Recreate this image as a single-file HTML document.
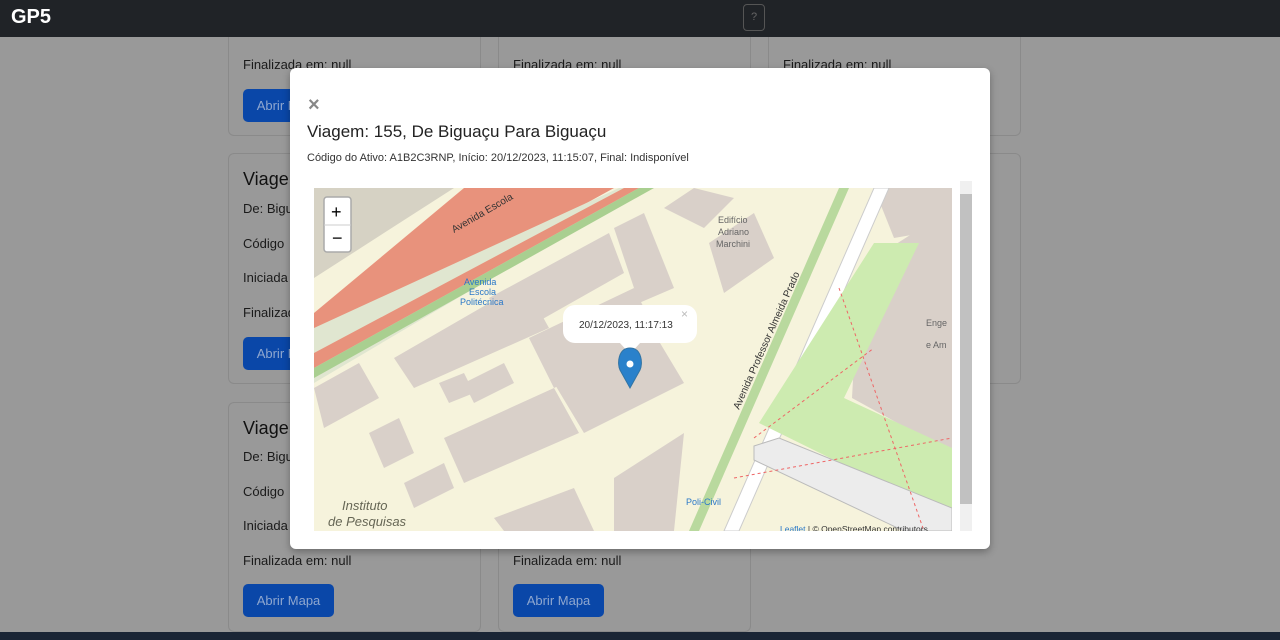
<!DOCTYPE html>
<html><head><meta charset="utf-8"><style>
*{box-sizing:border-box;margin:0;padding:0}
body{width:1280px;height:640px;overflow:hidden;background:#999;font-family:"Liberation Sans",sans-serif;position:relative;color:#111}
.nav{position:absolute;left:0;top:0;width:1280px;height:37px;background:#202327;z-index:5}
.nav .b{position:absolute;left:11px;top:6px;color:#fff;font-size:20px;font-weight:bold}
.nav .q{position:absolute;left:743px;top:4px;width:22px;height:27px;border:1px solid #555;border-radius:4px;color:#666;font-size:11px;text-align:center;line-height:25px}
.card{position:absolute;width:253px;border:1px solid #8a8a8a;border-radius:6px;background:#999}
.card .t{position:absolute;left:14px;font-size:18px;color:#111}
.card p{position:absolute;left:14px;font-size:13px;color:#1a1a1a;white-space:nowrap}
.btn{position:absolute;left:14px;width:91px;height:33px;background:#0a47a8;border-radius:5px;color:#8fa7cf;font-size:13px;line-height:33px;text-align:center}
.modal{position:absolute;left:290px;top:68px;width:700px;height:481px;background:#fff;border-radius:6px;box-shadow:0 3px 8px rgba(0,0,0,.3);z-index:3}
.tb{position:absolute;left:0;top:632px;width:1280px;height:8px;background:#1a2535}
</style></head><body>
<div class="nav"><div class="b">GP5</div><div class="q">?</div></div>

<div class="card" style="left:228px;top:-20px;height:156px"><p style="top:76px">Finalizada em: null</p><div class="btn" style="top:108px">Abrir Mapa</div></div>
<div class="card" style="left:498px;top:-20px;height:156px"><p style="top:76px">Finalizada em: null</p></div>
<div class="card" style="left:768px;top:-20px;height:156px"><p style="top:76px">Finalizada em: null</p></div>

<div class="card" style="left:228px;top:153px;height:231px"><div class="t" style="top:15px">Viagem</div><p style="top:47px">De: Biguaçu</p><p style="top:82px">Código</p><p style="top:116px">Iniciada</p><p style="top:151px">Finalizada</p><div class="btn" style="top:183px">Abrir Mapa</div></div>
<div class="card" style="left:498px;top:153px;height:231px"></div>
<div class="card" style="left:768px;top:153px;height:231px"></div>

<div class="card" style="left:228px;top:402px;height:230px"><div class="t" style="top:15px">Viagem</div><p style="top:46px">De: Biguaçu</p><p style="top:81px">Código</p><p style="top:115px">Iniciada</p><p style="top:150px">Finalizada em: null</p><div class="btn" style="top:181px">Abrir Mapa</div></div>
<div class="card" style="left:498px;top:402px;height:230px"><p style="top:150px">Finalizada em: null</p><div class="btn" style="top:181px">Abrir Mapa</div></div>

<div class="modal">
<div style="position:absolute;left:18px;top:26px;font-size:20px;color:#888;font-weight:bold">×</div>
<div style="position:absolute;left:17px;top:54px;font-size:17px;color:#222">Viagem: 155, De Biguaçu Para Biguaçu</div>
<div style="position:absolute;left:17px;top:84px;font-size:11px;color:#333">Código do Ativo: A1B2C3RNP, Início: 20/12/2023, 11:15:07, Final: Indisponível</div>
<div style="position:absolute;left:670px;top:113px;width:12px;height:350px;background:#f0f0f0"><div style="position:absolute;top:13px;left:0;width:12px;height:310px;background:#c1c1c1"></div></div>
<svg style="position:absolute;left:24px;top:120px" width="638" height="343" viewBox="0 0 638 343">
<rect width="638" height="343" fill="#f6f3dc"/>
<polygon points="0,0 140,0 0,90" fill="#d6d2c4"/>
<polygon points="150,0 300,0 0,165 0,125" fill="#e8927c"/>
<polygon points="0,140 305,0 330,0 0,195" fill="#e0e6d0"/>
<polygon points="0,165 310,0 325,0 0,180" fill="#e8927c"/>
<polygon points="0,180 325,0 340,0 0,190" fill="#a9cf90"/>
<g fill="#d9d0c9">
<polygon points="80,170 210,95 235,140 100,200"/>
<polygon points="175,110 295,45 310,85 195,150"/>
<polygon points="300,40 330,25 360,100 325,115"/>
<polygon points="215,150 320,100 345,150 240,200"/>
<polygon points="240,195 340,145 370,195 270,245"/>
<polygon points="130,250 240,200 265,245 150,295"/>
<polygon points="0,200 45,175 65,210 10,240"/>
<polygon points="125,195 150,185 160,205 135,215"/>
<polygon points="150,195 190,175 200,195 160,215"/>
<polygon points="90,295 130,275 140,300 100,320"/>
<polygon points="55,245 85,230 100,265 70,280"/>
<polygon points="300,290 370,245 360,343 300,343"/>
<polygon points="350,20 380,0 420,10 390,40"/>
<polygon points="395,55 440,25 460,70 410,105"/>
<polygon points="545,80 638,20 638,265 538,210"/>
<polygon points="560,0 638,0 638,40 580,50"/>
<polygon points="180,330 260,300 280,343 190,343"/>
</g>
<polygon points="375,343 525,0 535,0 385,343" fill="#b9d99e"/>
<polygon points="395,343 545,0 555,0 405,343" fill="#f6f3dc"/>
<polygon points="410,343 560,0 575,0 425,343" fill="#fff" stroke="#ccc"/>
<polygon points="445,235 560,55 605,55 530,210 638,260 638,330" fill="#cdebb0"/>
<polygon points="440,258 465,250 638,320 638,343 590,343 440,272" fill="#ececec" stroke="#bbb"/>
<g stroke="#e66" stroke-dasharray="3,3" fill="none" stroke-width="1"><path d="M525,100 L610,343"/><path d="M440,250 L560,160"/><path d="M420,290 L638,250"/></g>
<text x="404" y="35" font-size="9" fill="#666">Edifício</text><text x="404" y="47" font-size="9" fill="#666">Adriano</text><text x="402" y="59" font-size="9" fill="#666">Marchini</text>
<text x="150" y="97" font-size="9" fill="#2a78c8">Avenida</text><text x="155" y="107" font-size="9" fill="#2a78c8">Escola</text><text x="146" y="117" font-size="9" fill="#2a78c8">Politécnica</text>
<text x="372" y="317" font-size="9" fill="#2a78c8">Poli-Civil</text>
<text x="28" y="322" font-size="13" font-style="italic" fill="#665">Instituto</text><text x="14" y="338" font-size="13" font-style="italic" fill="#665">de Pesquisas</text>
<text x="0" y="0" font-size="10" fill="#333" transform="translate(425,222) rotate(-66)">Avenida Professor Almeida Prado</text>
<text x="0" y="0" font-size="10" fill="#333" transform="translate(140,45) rotate(-30)">Avenida Escola</text>
<text x="612" y="138" font-size="9" fill="#666">Enge</text><text x="612" y="160" font-size="9" fill="#666">e Am</text>
<text x="466" y="344" font-size="8.5" fill="#333"><tspan fill="#2a78c8">Leaflet</tspan> | © OpenStreetMap contributors</text>
<rect x="10" y="9" width="27" height="55" rx="3" fill="#fff" stroke="#aaa" stroke-width="1.5"/>
<line x1="10" y1="37" x2="37" y2="37" stroke="#ccc"/>
<text x="17" y="30" font-size="18" fill="#000">+</text><text x="18" y="56" font-size="18" fill="#000">−</text>
<rect x="249" y="117" width="134" height="38" rx="12" fill="#fff"/>
<polygon points="305,154 327,154 316,166" fill="#fff"/>
<text x="265" y="140" font-size="10" fill="#333">20/12/2023, 11:17:13</text>
<text x="367" y="130" font-size="12" fill="#bbb">×</text>
<path d="M316,160 C304,160 303,176 306,182 L316,200 L326,182 C329,176 328,160 316,160Z" fill="#2a81cb" stroke="#3274a3"/>
<circle cx="316" cy="176" r="3.5" fill="#fff"/>
</svg>
</div>
<div class="tb"></div>
</body></html>
